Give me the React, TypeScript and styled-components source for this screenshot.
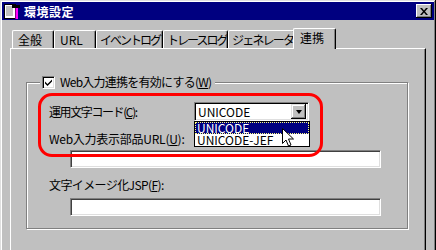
import React from "react";
import styled, { createGlobalStyle } from "styled-components";

const GlobalStyle = createGlobalStyle`
  html, body {
    margin: 0;
    padding: 0;
    overflow: hidden;
    background: #c0c0c0;
  }
  body {
    font-family: "Noto Sans CJK JP", sans-serif;
    font-size: 12px;
    color: #000;
  }
`;

const tabs = [
  { label: "全般", width: 42, track: 0 },
  { label: "URL", width: 42, track: 0 },
  { label: "イベントログ", width: 67, track: -2 },
  { label: "トレースログ", width: 65, track: -2 },
  { label: "ジェネレータ", width: 67, track: -1.8 },
  { label: "連携", width: 39, track: 0, active: true },
];

export default function App() {
  return (
    <>
      <GlobalStyle />
      <Window>
        <TitleBar>
          <AppIcon />
          <Title>環境設定</Title>
          <CloseButton aria-label="閉じる">
            <svg width="8" height="7" viewBox="0 0 8 7">
              <path d="M0 0h2l2 2.5L6 0h2L5 3.5 8 7H6L4 4.5 2 7H0l3-3.5z" fill="#000" />
            </svg>
          </CloseButton>
        </TitleBar>
        <Body>
          <TabStrip>
            {tabs.map((tab) => (
              <Tab key={tab.label} $w={tab.width} $track={tab.track} $active={tab.active}>
                {tab.label}
              </Tab>
            ))}
          </TabStrip>
          <Panel>
            <Group>
              <Legend>
                <CheckBox>
                  <svg width="7" height="7" viewBox="0 0 7 7">
                    <path d="M0 2.5l2.5 2.5L7 0.5v2L2.5 7 0 4.5z" fill="#000" />
                  </svg>
                </CheckBox>
                <FieldLabel $track={-0.75}>
                  Web入力連携を有効にする(<u>W</u>)
                </FieldLabel>
              </Legend>
              <Content>
                <ComboRow>
                  <FieldLabel $width={145} $track={-1.4}>
                    運用文字コード(<u>C</u>):
                  </FieldLabel>
                  <ComboWrap>
                    <Combo>
                      <ComboText>UNICODE</ComboText>
                      <DropButton>
                        <Arrow />
                      </DropButton>
                    </Combo>
                    <DropList>
                      <DropItem $selected>UNICODE</DropItem>
                      <DropItem>UNICODE-JEF</DropItem>
                      <Pointer />
                    </DropList>
                  </ComboWrap>
                </ComboRow>
                <FieldLabel $top={11} $track={-0.25}>
                  Web入力表示部品URL(<u>U</u>):
                </FieldLabel>
                <TextBox $top={4} />
                <FieldLabel $top={10} $track={-0.6}>
                  文字イメージ化JSP(<u>F</u>):
                </FieldLabel>
                <TextBox $top={6} />
                <Highlight />
              </Content>
            </Group>
          </Panel>
        </Body>
      </Window>
    </>
  );
}

function AppIcon() {
  return (
    <svg width="16" height="16" viewBox="0 0 16 16">
      <rect x="0.5" y="1.5" width="11" height="14" fill="#fff" stroke="#000" />
      <path d="M2 4h7M2 6h7M2 8h7M2 10h7M2 12h7" stroke="#808080" />
      <rect x="8" y="2" width="8" height="3" fill="#000" />
      <rect x="11" y="5" width="3" height="11" fill="#ff00ff" />
      <rect x="11" y="5" width="1" height="11" fill="#800080" />
    </svg>
  );
}

function Pointer() {
  return (
    <PointerSvg width="12" height="20" viewBox="0 0 12 20">
      <path
        d="M0.5 0.5v15l3.5-3.5 2.5 6 2.5-1-2.5-6h5z"
        fill="#fff"
        stroke="#000"
        strokeWidth="1"
      />
    </PointerSvg>
  );
}

const Window = styled.div`
  box-sizing: border-box;
  width: 436px;
  min-height: 270px;
  padding: 2px;
  background: #c0c0c0;
  box-shadow: inset -1px -1px #000, inset 1px 1px #dfdfdf, inset -2px -2px #808080,
    inset 2px 2px #fff;
`;

const TitleBar = styled.div`
  height: 18px;
  display: flex;
  align-items: center;
  gap: 4px;
  padding: 0 2px 0 2px;
  background: #000080;
`;

const Title = styled.span`
  color: #fff;
  font-weight: 700;
  font-size: 12px;
  letter-spacing: 0.5px;
`;

const CloseButton = styled.button`
  box-sizing: border-box;
  margin-left: auto;
  width: 16px;
  height: 14px;
  padding: 0;
  border: none;
  display: grid;
  place-items: center;
  background: #c0c0c0;
  box-shadow: inset -1px -1px #000, inset 1px 1px #fff, inset -2px -2px #808080;
`;

const Body = styled.div`
  padding: 8px 8px 0 8px;
`;

const TabStrip = styled.div`
  height: 20px;
  display: flex;
  align-items: flex-end;
  padding-left: 2px;
`;

const Tab = styled.div<{ $w: number; $track: number; $active?: boolean }>`
  box-sizing: border-box;
  position: relative;
  z-index: ${({ $active }) => ($active ? 2 : 0)};
  width: ${({ $w, $active }) => $w + ($active ? 4 : 0)}px;
  height: ${({ $active }) => ($active ? 21 : 18)}px;
  margin: ${({ $active }) => ($active ? "0 -2px -1px" : "0")};
  padding: ${({ $active, $track }) =>
    $active ? "0 0 3px 6px" : `0 0 0 ${$track ? 3 : 5}px`};
  display: flex;
  align-items: center;
  white-space: nowrap;
  overflow: hidden;
  letter-spacing: ${({ $track }) => $track}px;
  background: #c0c0c0;
  border-top: 1px solid #fff;
  border-left: 1px solid #fff;
  border-right: 1px solid #000;
  border-radius: 2px 2px 0 0;
  box-shadow: inset -1px 0 #808080;
`;

const Panel = styled.div`
  border-top: 1px solid #fff;
  border-left: 1px solid #fff;
  border-right: 1px solid #000;
  box-shadow: inset -1px 0 #808080;
  padding: 26px 17px 40px 15px;
`;

const Group = styled.fieldset`
  margin: 0;
  min-width: 0;
  padding: 0 0 12px 22px;
  border: 1px solid #808080;
  box-shadow: inset 1px 1px 0 #fff, 1px 1px 0 #fff;
`;

const Legend = styled.legend`
  height: 14px;
  display: flex;
  align-items: center;
  gap: 5px;
  margin-left: -9px;
  padding: 0 4px 0 2px;
  background: #c0c0c0;
  white-space: nowrap;
`;

const CheckBox = styled.span`
  box-sizing: border-box;
  width: 13px;
  height: 13px;
  display: grid;
  place-items: center;
  background: #fff;
  border-top: 1px solid #808080;
  border-left: 1px solid #808080;
  border-right: 1px solid #fff;
  border-bottom: 1px solid #fff;
  box-shadow: inset 1px 1px #000, inset -1px -1px #dfdfdf;
`;

const Content = styled.div`
  position: relative;
  margin-top: 13px;
`;

const ComboRow = styled.div`
  height: 19px;
  display: flex;
  align-items: center;
`;

const FieldLabel = styled.div<{ $width?: number; $top?: number; $track?: number }>`
  width: ${({ $width }) => ($width ? `${$width}px` : "max-content")};
  flex: none;
  margin-top: ${({ $top }) => $top ?? 0}px;
  height: 14px;
  line-height: 14px;
  white-space: nowrap;
  letter-spacing: ${({ $track }) => $track ?? 0}px;
`;

const ComboWrap = styled.div`
  position: relative;
`;

const Combo = styled.div`
  box-sizing: border-box;
  width: 115px;
  height: 19px;
  display: flex;
  align-items: center;
  padding: 2px;
  background: #fff;
  border-top: 1px solid #808080;
  border-left: 1px solid #808080;
  border-right: 1px solid #fff;
  border-bottom: 1px solid #fff;
  box-shadow: inset 1px 1px #000, inset -1px -1px #dfdfdf;
`;

const ComboText = styled.span`
  flex: 1;
  padding-left: 1px;
  line-height: 14px;
`;

const DropButton = styled.span`
  box-sizing: border-box;
  width: 15px;
  height: 15px;
  display: grid;
  place-items: center;
  background: #c0c0c0;
  box-shadow: inset -1px -1px #000, inset 1px 1px #dfdfdf, inset -2px -2px #808080,
    inset 2px 2px #fff;
`;

const Arrow = styled.span`
  width: 0;
  height: 0;
  border-left: 3.5px solid transparent;
  border-right: 3.5px solid transparent;
  border-top: 4px solid #000;
`;

const DropList = styled.div`
  position: absolute;
  z-index: 3;
  top: 100%;
  left: 0;
  box-sizing: border-box;
  width: 116px;
  border: 1px solid #000;
  background: #fff;
`;

const DropItem = styled.div<{ $selected?: boolean }>`
  height: 12px;
  line-height: 12px;
  padding-left: 2px;
  white-space: nowrap;
  color: ${({ $selected }) => ($selected ? "#fff" : "#000")};
  background: ${({ $selected }) => ($selected ? "#000080" : "#fff")};
  outline: ${({ $selected }) => ($selected ? "1px dotted #ffff80" : "none")};
  outline-offset: -1px;
`;

const PointerSvg = styled.svg`
  position: absolute;
  left: 87px;
  top: 6px;
`;

const TextBox = styled.div<{ $top: number }>`
  box-sizing: border-box;
  width: 311px;
  height: 18px;
  margin: ${({ $top }) => $top}px 0 0 21px;
  background: #fff;
  border-top: 1px solid #808080;
  border-left: 1px solid #808080;
  border-right: 1px solid #fff;
  border-bottom: 1px solid #fff;
  box-shadow: inset 1px 1px #404040, inset -1px -1px #dfdfdf;
`;

const Highlight = styled.div`
  position: absolute;
  z-index: 2;
  left: -11px;
  top: -9px;
  box-sizing: border-box;
  width: 285px;
  height: 64px;
  border: 3px solid #ff0000;
  border-radius: 14px;
  pointer-events: none;
`;
